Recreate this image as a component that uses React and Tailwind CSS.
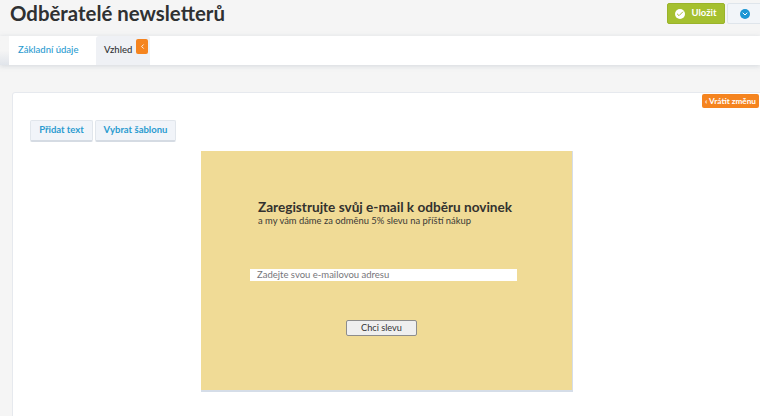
import { Check, ChevronDown, ChevronLeft } from 'lucide-react';

export default function App() {
  return (
    <div className="w-[760px] h-[416px] overflow-hidden flex flex-col bg-[#f5f5f5] font-['Lato',sans-serif]">
      {/* Header */}
      <div className="h-[36px] shrink-0 flex items-start justify-between pl-[10px]">
        <h1 className="text-[20.4px] leading-[27px] font-bold text-[#2f3132]">Odběratelé newsletterů</h1>
        <div className="flex gap-[2px] pt-[3px] -mr-[8px]">
          <button className="h-[21px] w-[58px] flex items-center justify-center gap-[6px] bg-[#a5c02f] border border-[#9ab32b] rounded-[2px] text-white text-[9.5px] font-bold">
            <span className="w-[10px] h-[10px] rounded-full bg-white flex items-center justify-center">
              <Check className="w-[8px] h-[8px] text-[#a5c02f]" strokeWidth={3} />
            </span>
            Uložit
          </button>
          <button className="h-[21px] w-[41px] flex items-center pl-[12px] bg-[#f2f5f9] border border-[#dfe5eb] rounded-[2px]">
            <span className="w-[10px] h-[10px] rounded-full bg-[#1a96d4] flex items-center justify-center">
              <ChevronDown className="w-[8px] h-[8px] text-white" strokeWidth={3} />
            </span>
          </button>
        </div>
      </div>

      {/* Tabs */}
      <div className="h-[29px] shrink-0 bg-white flex shadow-[0_1px_5px_rgba(150,160,175,0.35)]">
        <div className="w-[9px] bg-gradient-to-b from-[#f5f5f5] via-[#f5f5f5] to-[#e1e5eb]"></div>
        <div className="w-[87px] flex items-center pl-[9px] text-[9.5px] font-medium text-[#2a9bd0]">Základní údaje</div>
        <div className="relative w-[54px] bg-[#eff1f5] rounded-t-[3px] flex items-center pl-[8px] text-[9.5px] font-medium text-[#303234]">
          Vzhled
          <span className="absolute left-[40px] top-[3px] w-[12px] h-[15px] bg-[#f5841f] rounded-[2px] flex items-center justify-center">
            <ChevronLeft className="w-[7px] h-[7px] text-white" strokeWidth={3} />
          </span>
        </div>
      </div>

      {/* Card */}
      <div className="flex-1 pt-[27px] pl-[12px]">
        <div className="relative h-[340px] w-[760px] bg-white border border-[#e6e9ee] rounded-tl-[3px] pt-[27px] pl-[17px]">
          <button className="absolute left-[689px] top-[1px] w-[57px] h-[14px] bg-[#f5841f] rounded-[2px] text-white text-[8.2px] font-bold flex items-center justify-center whitespace-nowrap">
            ‹ Vrátit změnu
          </button>

          <div className="flex gap-[2px]">
            <button className="h-[22px] w-[63px] bg-[#f1f4f9] border border-[#e1e6ec] border-b-2 border-b-[#d5dbe3] rounded-[2px] text-[9.5px] font-bold text-[#2a9bd0]">Přidat text</button>
            <button className="h-[22px] w-[81px] bg-[#f1f4f9] border border-[#e1e6ec] border-b-2 border-b-[#d5dbe3] rounded-[2px] text-[9.5px] font-bold text-[#2a9bd0]">Vybrat šablonu</button>
          </div>

          {/* Template preview */}
          <div className="mt-[9px] ml-[171px] w-[372px] h-[241px] bg-[#f0db96] border-r border-b-2 border-[#d5dde8] flex flex-col items-start pt-[48px]">
            <div className="pl-[57px] text-[13.6px] leading-[16px] font-bold text-[#33322f]">Zaregistrujte svůj e-mail k odběru novinek</div>
            <div className="pl-[57px] text-[9.4px] leading-[12px] text-[#3b3a36]">a my vám dáme za odměnu 5% slevu na příští nákup</div>
            <div className="mt-[42px] ml-[49px] w-[267px] h-[12px] bg-white flex items-center pl-[7px] text-[9.5px] text-[#76757a]">Zadejte svou e-mailovou adresu</div>
            <button className="mt-[39px] ml-[145px] w-[71px] h-[16px] bg-[#efefef] border border-[#8d8d8d] rounded-[2px] text-[9.2px] leading-none text-[#333]">Chci slevu</button>
          </div>
        </div>
      </div>
    </div>
  );
}
